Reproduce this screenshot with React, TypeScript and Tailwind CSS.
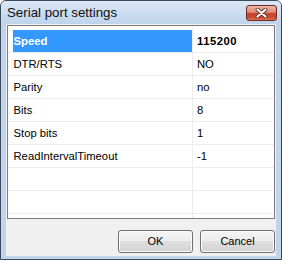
import React from "react";

const font = { fontFamily: '"Liberation Sans", Arial, sans-serif' };

const rows: [string, string][] = [
  ["Speed", "115200"],
  ["DTR/RTS", "NO"],
  ["Parity", "no"],
  ["Bits", "8"],
  ["Stop bits", "1"],
  ["ReadIntervalTimeout", "-1"],
  ["", ""],
  ["", ""],
];

function CloseGlyph() {
  return (
    <svg width="13" height="10" viewBox="0 0 13 10">
      <path d="M2.5 1.5 L10.5 8.5 M10.5 1.5 L2.5 8.5" stroke="#5a2a20" strokeWidth="3.8" strokeLinecap="round" fill="none" />
      <path d="M2.5 1.5 L10.5 8.5 M10.5 1.5 L2.5 8.5" stroke="#ffffff" strokeWidth="2.2" strokeLinecap="round" fill="none" />
    </svg>
  );
}

export default function App() {
  return (
    <div style={font} className="w-[282px] h-[260px] flex flex-col rounded-t-[6px] border border-[#3b4a5c] bg-[#c1d4eb] overflow-hidden">
      <div className="h-[23px] shrink-0 flex items-center bg-gradient-to-b from-[#dbe7f5] to-[#bfd3eb]">
        <span className="pl-[6px] text-[13.3px] leading-none text-[#101010]">Serial port settings</span>
        <div className="ml-auto mr-[4px] w-[31px] h-[16px] rounded-[3px] border border-[#6e2c22] flex items-center justify-center bg-[linear-gradient(to_bottom,#ecb3a5_0%,#de8d7b_45%,#c9462e_52%,#c74a31_80%,#dd7456_100%)]">
          <CloseGlyph />
        </div>
      </div>
      <div className="flex-1 mx-[5px] mb-[3px] bg-[#f0f0f0] flex flex-col">
        <div className="mt-[1px] mx-[1px] h-[194px] border border-[#7c7c7c] bg-white flex flex-col text-[11.25px] text-black">
          <div className="h-[4px] shrink-0 flex">
            <div className="w-[184px]" />
            <div className="flex-1 border-l border-[#ececec]" />
          </div>
          {rows.map(([k, v], i) => (
            <div key={i} className="h-[23px] shrink-0 flex border-b border-[#ececec]">
              <div className="w-[5px]" />
              <div className={"w-[179px] flex items-center " + (i === 0 ? "bg-[#3399ff] text-white font-bold" : "")}>
                <span className="pl-[0.5px]">{k}</span>
              </div>
              <div className={"flex-1 flex items-center pl-[4px] border-l border-[#ececec] " + (i === 0 ? "font-bold tracking-[0.5px]" : "")}>
                {v}
              </div>
            </div>
          ))}
          <div className="flex-1 flex">
            <div className="w-[184px]" />
            <div className="flex-1 border-l border-[#ececec]" />
          </div>
        </div>
        <div className="mt-[11px] mr-[1px] flex justify-end gap-[7px]">
          {["OK", "Cancel"].map((t) => (
            <div key={t} className="w-[75px] h-[23px] rounded-[3px] border border-[#707070] flex items-center justify-center text-[11px] text-black bg-[linear-gradient(to_bottom,#f4f4f4_0%,#ececec_50%,#dfdfdf_50%,#d2d2d2_100%)] shadow-[inset_0_0_0_1px_#fbfbfb]">
              {t}
            </div>
          ))}
        </div>
      </div>
    </div>
  );
}
